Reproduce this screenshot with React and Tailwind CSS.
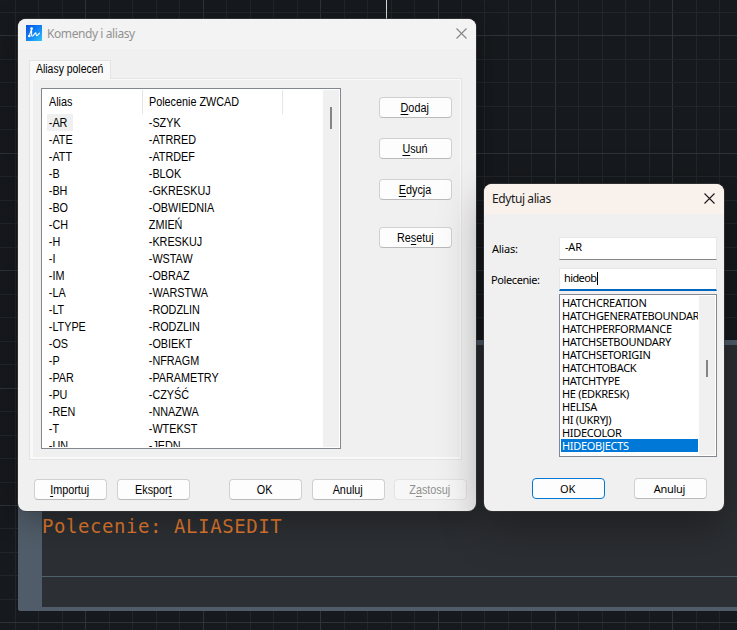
import React, { useState } from "react";

const aliases = [
  ["-AR", "-SZYK"],
  ["-ATE", "-ATRRED"],
  ["-ATT", "-ATRDEF"],
  ["-B", "-BLOK"],
  ["-BH", "-GKRESKUJ"],
  ["-BO", "-OBWIEDNIA"],
  ["-CH", "ZMIEŃ"],
  ["-H", "-KRESKUJ"],
  ["-I", "-WSTAW"],
  ["-IM", "-OBRAZ"],
  ["-LA", "-WARSTWA"],
  ["-LT", "-RODZLIN"],
  ["-LTYPE", "-RODZLIN"],
  ["-OS", "-OBIEKT"],
  ["-P", "-NFRAGM"],
  ["-PAR", "-PARAMETRY"],
  ["-PU", "-CZYŚĆ"],
  ["-REN", "-NNAZWA"],
  ["-T", "-WTEKST"],
  ["-UN", "-JEDN"],
];

const commands = [
  "HATCHCREATION",
  "HATCHGENERATEBOUNDARY",
  "HATCHPERFORMANCE",
  "HATCHSETBOUNDARY",
  "HATCHSETORIGIN",
  "HATCHTOBACK",
  "HATCHTYPE",
  "HE (EDKRESK)",
  "HELISA",
  "HI (UKRYJ)",
  "HIDECOLOR",
  "HIDEOBJECTS",
];

// Drawing area grid, every fifth line is a major one
function Grid() {
  const lines = [];
  for (let k = -4; k < 30; k++) lines.push(k);
  const color = (k) => (k % 5 === 0 ? "#2c3339" : "#20262b");
  return (
    <svg className="absolute inset-0" width="737" height="630" shapeRendering="crispEdges">
      {lines.map((k) => (
        <rect key={"v" + k} x={Math.round(85.3 + 23.48 * k)} y="0" width="1" height="630" fill={color(k)} />
      ))}
      {lines.map((k) => (
        <rect key={"h" + k} x="0" y={Math.round(35.4 + 23.48 * k)} width="737" height="1" fill={color(k)} />
      ))}
      <rect x="386" y="0" width="1" height="20" fill="#d8d8d8" />
    </svg>
  );
}

function CloseIcon({ color }) {
  return (
    <svg className="relative -top-px left-[0.5px]" width="11" height="11" viewBox="0 0 11 11" fill="none" stroke={color} strokeWidth="1.1">
      <path d="M0.5 0.5 L10.5 10.5 M10.5 0.5 L0.5 10.5" />
    </svg>
  );
}

function Logo() {
  return (
    <svg className="relative -top-px" width="16" height="16" viewBox="0 0 16 16">
      <defs>
        <linearGradient id="logo" x1="0" y1="0" x2="1" y2="1">
          <stop offset="0" stopColor="#0a50e0" />
          <stop offset="0.5" stopColor="#0f83f5" />
          <stop offset="1" stopColor="#35c4f5" />
        </linearGradient>
      </defs>
      <rect width="16" height="16" fill="url(#logo)" />
      <path
        d="M3.4 10.6 L5.6 3.8 V9.6 Q5.6 12.2 7.2 10.6 L9.2 8 Q10 7.4 10 8.6 Q10 11.4 11.4 10.4 L13.8 7.8"
        fill="none"
        stroke="#fff"
        strokeWidth="1.1"
        strokeLinejoin="round"
      />
      <circle cx="5.6" cy="3.6" r="1.3" fill="#fff" />
      <circle cx="3.3" cy="11" r="1.3" fill="#fff" />
    </svg>
  );
}

// Button with an optional underlined access key
function Button({ label, hotkey = -1, disabled, primary, tahoma, className = "" }) {
  let border = "border-[#d0d0d0] border-b-[#bababa] bg-[#fdfdfd] text-black";
  if (disabled) border = "border-[#e3e3e3] bg-[#f7f7f7] text-[#8f8f8f]";
  if (primary) border = "border-[#0078d4] bg-[#fdfdfd] text-black";
  const font = tahoma
    ? "font-['Noto_Sans',sans-serif] text-[11px] tracking-[-0.3px]"
    : "font-['Liberation_Sans',sans-serif] text-[12px]";
  return (
    <button
      disabled={disabled}
      className={`flex h-[21px] w-[73px] shrink-0 items-center justify-center rounded-[4px] border leading-none ${border} ${font} ${className}`}>
      <span className={tahoma ? "relative right-px" : "relative right-[0.5px] scale-x-90"}>
        {hotkey < 0 ? (
          label
        ) : (
          <>
            {label.slice(0, hotkey)}
            <span className="underline decoration-1 underline-offset-2">{label[hotkey]}</span>
            {label.slice(hotkey + 1)}
          </>
        )}
      </span>
    </button>
  );
}

function AliasDialog() {
  return (
    <div className="absolute left-[18px] top-[19px] flex h-[492px] w-[458px] flex-col overflow-hidden rounded-[8px] bg-[#f0f0f0] font-['Liberation_Sans',sans-serif] text-[12px] text-black">
      <div className="flex h-[30px] shrink-0 items-center bg-[#f3f3f3] pl-2 pr-[10px]">
        <Logo />
        <span className="ml-[5px] flex-1 font-['Noto_Sans',sans-serif] text-[12px] tracking-[-0.42px] text-[#929292]">
          Komendy i aliasy
        </span>
        <CloseIcon color="#868686" />
      </div>

      <div className="relative z-10 ml-[11px] mt-[11px] flex h-[19px] w-[82px] shrink-0 items-center border border-b-0 border-[#e4e4e4] bg-[#f9f9f9] pl-[6px]">
        <span className="relative -top-px origin-left scale-x-[0.87] whitespace-nowrap">Aliasy poleceń</span>
      </div>
      <div className="-mt-px ml-[11px] h-[382px] w-[433px] shrink-0 border border-[#e4e4e4] bg-[#f9f9f9] pb-[2px] pl-[3px] pr-px pt-px">
        <div className="flex h-full bg-[#f0f0f0] pl-[8px] pt-[8px]">
          <div className="flex h-[361px] w-[300px] shrink-0 border border-[#828790] bg-white p-px">
            <div className="flex-1 overflow-hidden">
              <div className="flex h-6 items-center">
                <div className="h-full w-[100px] border-r border-[#e5e5e5] pl-[6px] leading-6">
                  <span className="inline-block origin-left scale-x-90">Alias</span>
                </div>
                <div className="h-full w-[140px] border-r border-[#e5e5e5] pl-[6px] leading-6">
                  <span className="inline-block origin-left scale-x-90 whitespace-nowrap">Polecenie ZWCAD</span>
                </div>
              </div>
              {aliases.map(([alias, command], i) => (
                <div key={alias} className="flex h-[17px] pl-1 leading-[18px]">
                  <div className="w-[100px]">
                    <span className={`inline-block h-[17px] ${i === 0 ? "w-[26px] bg-[#f0f0f0]" : ""}`}>
                      <span className="inline-block origin-left scale-x-90 pl-[2px]">{alias}</span>
                    </span>
                  </div>
                  <span className="inline-block origin-left scale-x-90 whitespace-nowrap pl-[2px]">{command}</span>
                </div>
              ))}
            </div>
            <div className="w-4 bg-[#f0f0f0] pl-[7px] pt-[17px]">
              <div className="h-[22px] w-[2px] bg-[#858585]" />
            </div>
          </div>
          <div className="ml-[38px] mt-[9px] flex flex-col gap-5">
            <Button label="Dodaj" hotkey={0} />
            <Button label="Usuń" hotkey={0} />
            <Button label="Edycja" hotkey={0} />
            <Button label="Resetuj" hotkey={2} className="mt-[7px]" />
          </div>
        </div>
      </div>

      <div className="mt-[19px] flex pl-4">
        <Button label="Importuj" hotkey={0} />
        <Button label="Eksport" hotkey={6} className="ml-[10px]" />
        <Button label="OK" className="ml-[39px]" />
        <Button label="Anuluj" className="ml-[10px]" />
        <Button label="Zastosuj" hotkey={1} disabled className="ml-[9px]" />
      </div>
    </div>
  );
}

function EditDialog() {
  const [alias, setAlias] = useState("-AR");
  const [command] = useState("hideob");
  return (
    <div className="absolute left-[484px] top-[184px] h-[327px] w-[240px] rounded-[8px] font-['Noto_Sans',sans-serif] text-[11px] text-black shadow-[0_14px_44px_rgba(0,0,0,0.35),0_0_0_1px_rgba(70,70,70,0.6)]">
      <div className="flex h-full flex-col overflow-hidden rounded-[8px] bg-[#f0f0f0]">
        <div className="flex h-[30px] shrink-0 items-center bg-[#f9f1ec] pl-2 pr-[10px]">
          <span className="flex-1 text-[12px] tracking-[-0.4px] text-[#1a1a1a]">Edytuj alias</span>
          <CloseIcon color="#1a1a1a" />
        </div>
        <div className="mt-[23px] flex h-[23px] items-center pl-2">
          <label className="relative top-px w-[67px] tracking-[-0.25px]">Alias:</label>
          <input
            value={alias}
            onChange={(e) => setAlias(e.target.value)}
            className="h-[23px] w-[158px] border border-[#e6e6e6] border-b-[#868686] bg-white pb-[4px] pl-[5px] tracking-[-0.2px] outline-none"
          />
        </div>
        <div className="mt-2 flex h-[23px] items-center pl-[7px]">
          <label className="relative top-px w-[68px] tracking-[-0.4px]">Polecenie:</label>
          <div className="flex h-[23px] w-[158px] items-center border border-b-2 border-[#e6e6e6] border-b-[#0067c0] bg-white pb-[2px] pl-1 tracking-[-0.6px]">
            {command}
            <span className="ml-px h-[13px] w-px bg-black" />
          </div>
        </div>
        <div className="ml-[75px] mt-[3px] flex h-[163px] w-[158px] shrink-0 border border-[#828790] bg-white p-px">
          <div className="w-[137px] overflow-hidden">
            {commands.map((name, i) => (
              <div
                key={name}
                className={`h-[13px] overflow-hidden whitespace-nowrap pl-px leading-[13px] tracking-[-0.3px] ${
                  i === commands.length - 1 ? "bg-[#0078d7] text-white" : ""
                }`}>
                {name}
              </div>
            ))}
          </div>
          <div className="ml-px w-4 bg-[#f0f0f0] pl-[7px] pt-[64px]">
            <div className="h-[17px] w-[2px] bg-[#858585]" />
          </div>
        </div>
        <div className="mt-[21px] flex gap-[29px] pl-12">
          <Button label="OK" primary tahoma />
          <Button label="Anuluj" tahoma />
        </div>
      </div>
    </div>
  );
}

// Command line panel docked behind both dialogs
function CommandLine() {
  return (
    <div className="absolute left-[18px] top-[340px] flex h-[271px] w-[719px] flex-col rounded-bl-[3px] border-b-4 border-l-[24px] border-t-[5px] border-[#505c69] bg-[#2c2f34]">
      <div className="flex h-[232px] items-end border-b border-[#4e6069] bg-[#2b2e32] pb-[38px]">
        <span className="whitespace-pre font-['DejaVu_Sans_Mono',monospace] text-[19px] leading-6 tracking-[0.57px] text-[#d9742c]">
          Polecenie: ALIASEDIT
        </span>
      </div>
    </div>
  );
}

function App() {
  return (
    <div className="relative h-[630px] w-[737px] overflow-hidden bg-[#16191d]">
      <Grid />
      <CommandLine />
      <div className="absolute left-[18px] top-[19px] h-[492px] w-[458px] rounded-[8px] shadow-[0_8px_30px_rgba(0,0,0,0.3),0_0_0_1px_rgba(70,70,70,0.6)]" />
      <AliasDialog />
      <EditDialog />
    </div>
  );
}

export default App;
